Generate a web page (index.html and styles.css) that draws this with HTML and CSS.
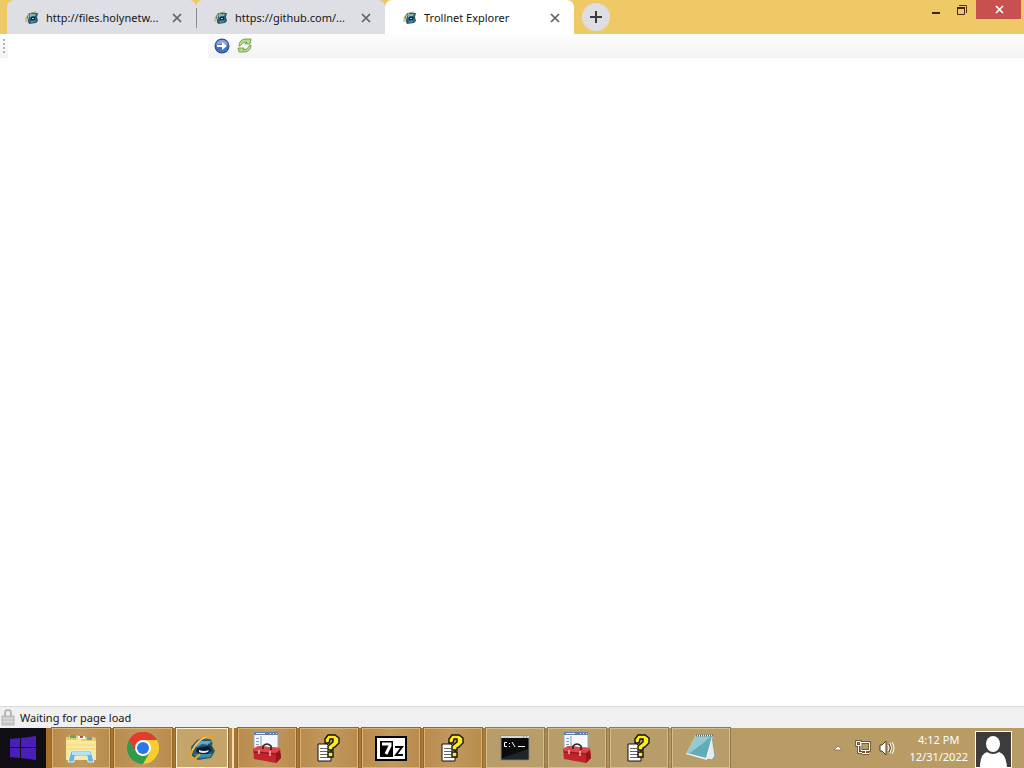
FILE: index.html
```
<!DOCTYPE html>
<html lang="en">
<head>
  <meta charset="UTF-8">
  <meta name="viewport" content="width=device-width, initial-scale=1.0">
  <title>Trollnet Explorer</title>
  <link rel="stylesheet" href="styles.css">
</head>
<body>
  <!-- shared icons -->
  <svg class="sprite" aria-hidden="true">
    <symbol id="ie" viewBox="0 0 28 28">
      <path d="M9 6 L15 4 L25 6 L24 12 L27 17 L23 24 L10 26 L4 22 L3 13Z" fill="#235a78"/>
      <path d="M10 7 L23 7 L21 11 L14 10 L9 13 L6 13Z" fill="#5fa9ca"/>
      <path d="M20 9 L24 13 L25 17 L21 18Z" fill="#173c53"/>
      <path d="M6 20 L24 20 L22 23 L11 24Z" fill="#3d8eae"/>
      <path d="M9 14 L20 12 L23 16 L20 20 L11 20 L8 17Z" fill="#071d2b"/>
      <path d="M11 16 Q16 18 21 16 L20 18 Q15 20 11 18Z" fill="#e4eeee"/>
      <path d="M24 8 Q27 1 21 2 Q11 4 6 14 Q0 24 4 25 Q7 26 12 20" fill="none" stroke="#e5a42a" stroke-width="2"/>
      <path d="M4 16 Q9 7 18 3" fill="none" stroke="#f7d98a" stroke-width="1"/>
    </symbol>
    <symbol id="ie-small" viewBox="0 0 14 14">
      <path d="M4 2 L13 2 L12 6 L13 10 L11 12 L4 13 L2 9 L2 5Z" fill="#285c70"/>
      <path d="M5 3 L11 3 L10 5 L7 5 L5 7Z" fill="#7fb7c8"/>
      <path d="M5 10 L11 9 L10 11 L6 12Z" fill="#3a88a5"/>
      <path d="M6 6 L10 6 L10 9 L6 9Z" fill="#0b2534"/>
      <path d="M7 7.5 H9" stroke="#b9d3d9"/>
      <path d="M1 11 Q0 7 3 4 Q6 1 11 1" fill="none" stroke="#b0a250"/>
      <path d="M4 4 L2 11" stroke="#d9d9b8"/>
    </symbol>
    <symbol id="close" viewBox="0 0 10 10">
      <path d="M1 1 L9 9 M9 1 L1 9" stroke="currentColor" stroke-width="1.7"/>
    </symbol>
    <symbol id="toolbox" viewBox="0 0 32 32">
      <path d="M3 0 H27 V24 H3Z" fill="#f5f8fc" stroke="#96a7bb"/>
      <path d="M3 0 H27 V3 H3Z" fill="#5f81a9"/>
      <path d="M5 1.5 H14 M19 1.5 H20 M22 1.5 H23 M25 1.5 H26" stroke="#dceaff"/>
      <path d="M10 4 V16 M5 6.5 H8 M5 9.5 H8 M5 12.5 H8" stroke="#7e9cc2"/>
      <path d="M2 17 L7 14 L29 16 L30 26 L25 31 L3 27Z" fill="#c1242a"/>
      <path d="M2 17 L7 14 L29 16 L29 19 L25 21 L3 19Z" fill="#dc484a"/>
      <path d="M25 21 L29 18 L30 26 L25 31Z" fill="#98151b"/>
      <path d="M3 20 L25 22" stroke="#8c171b"/>
      <path d="M12 17 V14 Q16 10 20 14 V18" fill="none" stroke="#3b2323" stroke-width="1.7"/>
      <path d="M8 18 V22 M19 19 V24" stroke="#efc3bd" stroke-width="1.4"/>
    </symbol>
    <symbol id="help" viewBox="0 0 28 28">
      <path d="M3 10 H12 L16 14 V27 H3Z" fill="#fff" stroke="#111"/>
      <path d="M5 14.5 H12 M5 17.5 H13 M5 20.5 H13 M5 23.5 H13" stroke="#666"/>
      <path d="M10 9 V5 L13 1 H20 L24 4 V9 L20 13 L18 14 V16 H13 V12 L18 8 V5 H15 L14 9Z" fill="#ffeb19" stroke="#111" stroke-width="1.4"/>
      <path d="M13 18 H18 V23 H13Z" fill="#ffeb19" stroke="#111" stroke-width="1.4"/>
    </symbol>
  </svg>

  <header class="titlebar">
    <div class="tabs">
      <div class="tab">
        <svg class="favicon"><use href="#ie-small"/></svg>
        <span class="tab-title">http://files.holynetw...</span>
        <button class="tab-close" aria-label="Close tab"><svg><use href="#close"/></svg></button>
      </div>
      <div class="tab divided">
        <svg class="favicon"><use href="#ie-small"/></svg>
        <span class="tab-title">https://github.com/...</span>
        <button class="tab-close" aria-label="Close tab"><svg><use href="#close"/></svg></button>
      </div>
      <div class="tab active">
        <svg class="favicon"><use href="#ie-small"/></svg>
        <span class="tab-title">Trollnet Explorer</span>
        <button class="tab-close" aria-label="Close tab"><svg><use href="#close"/></svg></button>
      </div>
      <button class="new-tab" aria-label="New tab">
        <svg viewBox="0 0 12 12"><path d="M6 0 V12 M0 6 H12" stroke="#363a40" stroke-width="2"/></svg>
      </button>
    </div>
    <div class="window-buttons">
      <button aria-label="Minimize"><svg viewBox="0 0 12 12"><path d="M2 9 H10" stroke="#3d2112" stroke-width="2"/></svg></button>
      <button aria-label="Restore"><svg viewBox="0 0 12 12"><path d="M3 1.5 H10.5 V9" fill="none" stroke="#5a2e14"/><path d="M1.5 4 H8.5 V10.5 H1.5Z" fill="none" stroke="#4b2410"/><path d="M1 4 H9" stroke="#4b2410" stroke-width="2"/></svg></button>
      <button class="window-close" aria-label="Close"><svg viewBox="0 0 12 12"><path d="M3 2 L10 9 M10 2 L3 9" stroke="#fff" stroke-width="1.6"/></svg></button>
    </div>
  </header>

  <div class="toolbar">
    <span class="grip"></span>
    <input class="address" type="text" aria-label="Address">
    <button aria-label="Go">
      <svg viewBox="0 0 16 16">
        <circle cx="8" cy="8" r="7.5" fill="#2b4c96"/>
        <circle cx="8" cy="8" r="6.5" fill="#4474bd"/>
        <path d="M2 7 Q3 2 8 2 Q13 2 14 7 Q8 5 2 7Z" fill="#88a9da"/>
        <path d="M3 7 H8 V4 L13 8 L8 12 V9 H3Z" fill="#fff"/>
      </svg>
    </button>
    <button aria-label="Refresh">
      <svg viewBox="0 0 16 16">
        <path d="M2 8 Q2 2 8 1 H14 L13 6 H8 L10 4 Q5 4 3 8Z" fill="#b5de85" stroke="#5d9440" stroke-width="0.8"/>
        <path d="M14 7 Q14 13 8 14 H2 L1 10 H7 L6 12 Q11 12 12 8Z" fill="#b5de85" stroke="#5d9440" stroke-width="0.8"/>
      </svg>
    </button>
  </div>

  <main class="page"></main>

  <footer class="statusbar">
    <svg viewBox="0 0 14 18">
      <path d="M4 9 V4 Q4 1 7 1 Q10 1 10 4 V9" fill="none" stroke="#b9b9b9" stroke-width="2"/>
      <path d="M1 7 H13 V16 H1Z" fill="#c8c8c6" stroke="#b4b4b2"/>
      <path d="M2 9.5 H12 M2 12.5 H12" stroke="#dededc"/>
    </svg>
    <span>Waiting for page load</span>
  </footer>

  <nav class="taskbar">
    <button class="start" aria-label="Start">
      <svg viewBox="0 0 28 26">
        <path d="M1 4 L11 3 V12 H1Z M12 3 L27 1 V12 H12Z M1 13 H11 V23 L1 22Z M12 13 H27 V25 L12 23Z" fill="#4a1fb8"/>
      </svg>
    </button>
    <div class="tasks">
      <button aria-label="File Explorer">
        <svg class="icon" viewBox="0 0 32 32">
          <path d="M1 5 H4 V3 H12 L14 5 H28 Q31 5 31 8 V28 H1Z" fill="#e8cb6b"/>
          <path d="M5 3 H11 V6 H5Z" fill="#5da96a"/>
          <path d="M13 4 H20 V7 H13Z" fill="#fff"/>
          <path d="M15 5 H18" stroke="#c94936" stroke-width="2"/>
          <path d="M22 5 H27 V8 H22Z" fill="#5b9fd3"/>
          <path d="M1 8 H11 L14 6 L17 9 H31 V28 H1Z" fill="#fae89c"/>
          <path d="M2 13 H30 M2 17 H30" stroke="#f2d779"/>
          <path d="M3 30 L6 19 H26 L29 30 H23 L22 24 H10 L9 30Z" fill="#66b4df" stroke="#d8f2fb"/>
          <path d="M7 20 H25 L26 23 H7Z" fill="#b7e2f4"/>
        </svg>
      </button>
      <button aria-label="Chrome">
        <svg class="icon" viewBox="0 0 32 32">
          <circle cx="16" cy="16" r="16" fill="#2f9b4b"/>
          <path d="M2.1 8 A16 16 0 0 1 29.9 8 H16 L9 20Z" fill="#e33b2e"/>
          <path d="M29.9 8 A16 16 0 0 1 16 32 L23 20 L16 8Z" fill="#fccb2e"/>
          <circle cx="16" cy="16" r="8" fill="#fff"/>
          <circle cx="16" cy="16" r="6" fill="#2878e7"/>
        </svg>
      </button>
      <div class="task-group">
        <button class="current" aria-label="Trollnet Explorer"><svg class="icon-small"><use href="#ie"/></svg></button>
      </div>
      <button aria-label="Toolbox"><svg class="icon"><use href="#toolbox"/></svg></button>
      <button aria-label="Help"><svg class="icon-small"><use href="#help"/></svg></button>
      <button aria-label="7-Zip">
        <svg class="icon" viewBox="0 0 32 32">
          <path d="M1 5 H31 V28 H1Z" fill="#fff" stroke="#000" stroke-width="2"/>
          <path d="M5 9 H18 V25 H5Z" fill="#000"/>
          <path d="M7 12 H15 V14 L11 22" fill="none" stroke="#fff" stroke-width="3"/>
          <path d="M20 15 H27 L21 23 H28" fill="none" stroke="#000" stroke-width="2"/>
        </svg>
      </button>
      <button aria-label="Help"><svg class="icon-small"><use href="#help"/></svg></button>
      <button class="pale" aria-label="Command Prompt">
        <svg class="icon" viewBox="0 0 32 32">
          <path d="M2 4 H30 V28 H2Z" fill="#090b0c" stroke="#87867f"/>
          <path d="M2 4 H30 V6 H2Z" fill="#d8d8d5"/>
          <path d="M24 5 H25 M27 5 H28" stroke="#666"/>
          <path d="M8 10.5 H5.5 V14.5 H8 M10.5 11 V12 M10.5 14 V15 M13 10 L16 15 M19 14.5 H26" fill="none" stroke="#fff"/>
          <path d="M3 26 L29 17 V27 H3Z" fill="#202527"/>
        </svg>
      </button>
      <button class="pale" aria-label="Toolbox"><svg class="icon"><use href="#toolbox"/></svg></button>
      <button class="pale" aria-label="Help"><svg class="icon-small"><use href="#help"/></svg></button>
      <button class="pale" aria-label="Notepad">
        <svg class="icon" viewBox="0 0 32 32">
          <path d="M27 4 L30 24 L27 28 L21 27Z" fill="#e6eae8" stroke="#8d9b9a"/>
          <path d="M11 3 L28 3 L22 28 L1 22Z" fill="#edf7f7"/>
          <path d="M11 4 L27 4 L21 26 L2 21Z" fill="#62abba"/>
          <path d="M11 4 L27 4 L5 21 H2Z" fill="#94cbd3"/>
          <path d="M11 3.5 H28" stroke="#586f70" stroke-width="2" stroke-dasharray="1 1"/>
        </svg>
      </button>
    </div>
    <div class="tray">
      <button aria-label="Show hidden icons"><svg class="arrow" viewBox="0 0 10 6"><path d="M1 5 L5 1 L9 5Z" fill="#fff" stroke="#8a6474" stroke-width="0.8"/></svg></button>
      <button aria-label="Network">
        <svg viewBox="0 0 16 16">
          <path d="M6 2.5 H14.5 V10.5 H6Z M10.5 11 V14 M7 13.5 H14 M3.5 5 V12.5 H7 M1.5 1.5 H5.5 V5.5 H1.5Z" fill="none" stroke="#5c4726" stroke-width="2.4"/>
          <path d="M6 2.5 H14.5 V10.5 H6Z M10.5 11 V14 M7 13.5 H14 M3.5 5 V12.5 H7 M1.5 1.5 H5.5 V5.5 H1.5Z" fill="none" stroke="#fff"/>
        </svg>
      </button>
      <button aria-label="Volume">
        <svg viewBox="0 0 16 16">
          <path d="M1 5 H3 L7 1 V15 L3 11 H1Z" fill="#fff" stroke="#4f3e1e"/>
          <path d="M9 5 Q11 8 9 11 M11 3 Q14 8 11 13 M13 2 Q17 8 13 14" fill="none" stroke="#fff"/>
          <path d="M10 4 Q13 8 10 12" fill="none" stroke="#5d4a28"/>
        </svg>
      </button>
      <div class="clock">
        <time datetime="16:12">4:12 PM</time>
        <time datetime="2022-12-31">12/31/2022</time>
      </div>
      <button class="user" aria-label="User">
        <svg viewBox="0 0 35 35">
          <ellipse cx="17" cy="12" rx="7" ry="8" fill="#fff"/>
          <path d="M4 35 Q4 22 11 20 Q17 24 23 20 Q30 22 31 35Z" fill="#fff"/>
        </svg>
      </button>
    </div>
  </nav>
</body>
</html>
```
FILE: styles.css
```
* { box-sizing: border-box; }
body { display: flex; flex-direction: column; height: 100vh; margin: 0; overflow: hidden; background: #fff; color: #151515; font: 11px/16px "Noto Sans", "Open Sans", sans-serif; }
button { display: flex; align-items: center; justify-content: center; margin: 0; padding: 0; border: 0; background: none; }
svg { display: block; flex: none; }
.sprite { position: absolute; width: 0; height: 0; }

.titlebar { display: flex; justify-content: space-between; height: 34px; flex: none; padding-left: 7px; background: #eec966; }
.tabs { display: flex; }
.tab { display: flex; align-items: center; width: 189px; height: 34px; padding: 1px 14px 0 18px; background: #dedfe5; border-radius: 7px 7px 0 0; }
.tab.divided { border-radius: 7px 7px 0 0; }
.tab.divided::before { content: ""; width: 1px; height: 20px; margin: 0 17px 0 -18px; background: #8b8b90; }
.tab.active { background: #fff; }
.favicon { width: 14px; height: 14px; margin-right: 7px; }
.tab-title { flex: 1; white-space: nowrap; }
.tab-close { width: 10px; height: 10px; color: #5f6065; }
.tab-close svg { width: 10px; height: 10px; }
.new-tab { width: 28px; height: 28px; margin: 3px 0 0 8px; border-radius: 50%; background: #dedee2; }
.new-tab svg { width: 12px; height: 12px; }
.window-buttons { display: flex; padding-right: 3px; }
.window-buttons button { width: 26px; height: 19px; }
.window-buttons svg { width: 12px; height: 12px; }
.window-buttons .window-close { width: 45px; margin-left: 1px; background: #c75050; }

.toolbar { display: flex; align-items: center; gap: 7px; height: 24px; flex: none; background: linear-gradient(#fdfdfd, #f3f3f3); }
.grip { width: 2px; height: 14px; margin: 0 -4px 0 3px; background: repeating-linear-gradient(#b4b4b4 0 2px, transparent 2px 4px); }
.address { width: 200px; height: 23px; margin-right: -1px; padding: 0 4px; border: 0; background: #fff; font: inherit; outline: 0; }
.toolbar svg { width: 16px; height: 16px; }
.page { flex: 1; background: #fff; }

.statusbar { display: flex; align-items: center; gap: 5px; height: 22px; flex: none; padding-left: 1px; border-top: 1px solid #d7d7d7; background: #f0f0f0; }
.statusbar svg { width: 14px; height: 18px; }

.taskbar { display: flex; height: 40px; flex: none; background: linear-gradient(90deg, #a66e26, #ab7936 46%, #a98f58 56%, #b89b65 72%, #b89b65); }
.start { width: 46px; background: #100e14; }
.start svg { width: 28px; height: 26px; }
.tasks { display: flex; gap: 4px; margin-left: 6px; }
.tasks button { width: 58px; height: 40px; border: 1px solid #d8b47a; background: linear-gradient(90deg, #b98c4c, #c19860 50%, #b98c4c); box-shadow: 0 0 0 1px #8e682f; }
.tasks .pale { border-color: #d2bd8b; background: #b89d6a; box-shadow: 0 0 0 1px #94794a; }
.task-group { width: 58px; padding-right: 4px; border-right: 2px solid #f2dcae; background: #ad894e; }
.tasks .current { width: 52px; border: 1px solid #fff0cb; background: #c5a469; }
.icon { width: 32px; height: 32px; }
.icon-small { width: 28px; height: 28px; }
.tray { display: flex; align-items: center; margin-left: auto; padding-right: 12px; color: #fff; }
.tray svg { width: 16px; height: 16px; }
.tray .arrow { width: 10px; height: 6px; margin-right: 12px; }
.tray button + button { margin-right: 8px; }
.clock { display: flex; flex-direction: column; align-items: center; margin: 0 7px 0 6px; line-height: 17px; }
.tray .user { width: 37px; height: 37px; margin-right: 0; align-self: flex-end; border: 1px solid #fff; background: #3c3c3c; }
.user svg { width: 35px; height: 35px; }
```
